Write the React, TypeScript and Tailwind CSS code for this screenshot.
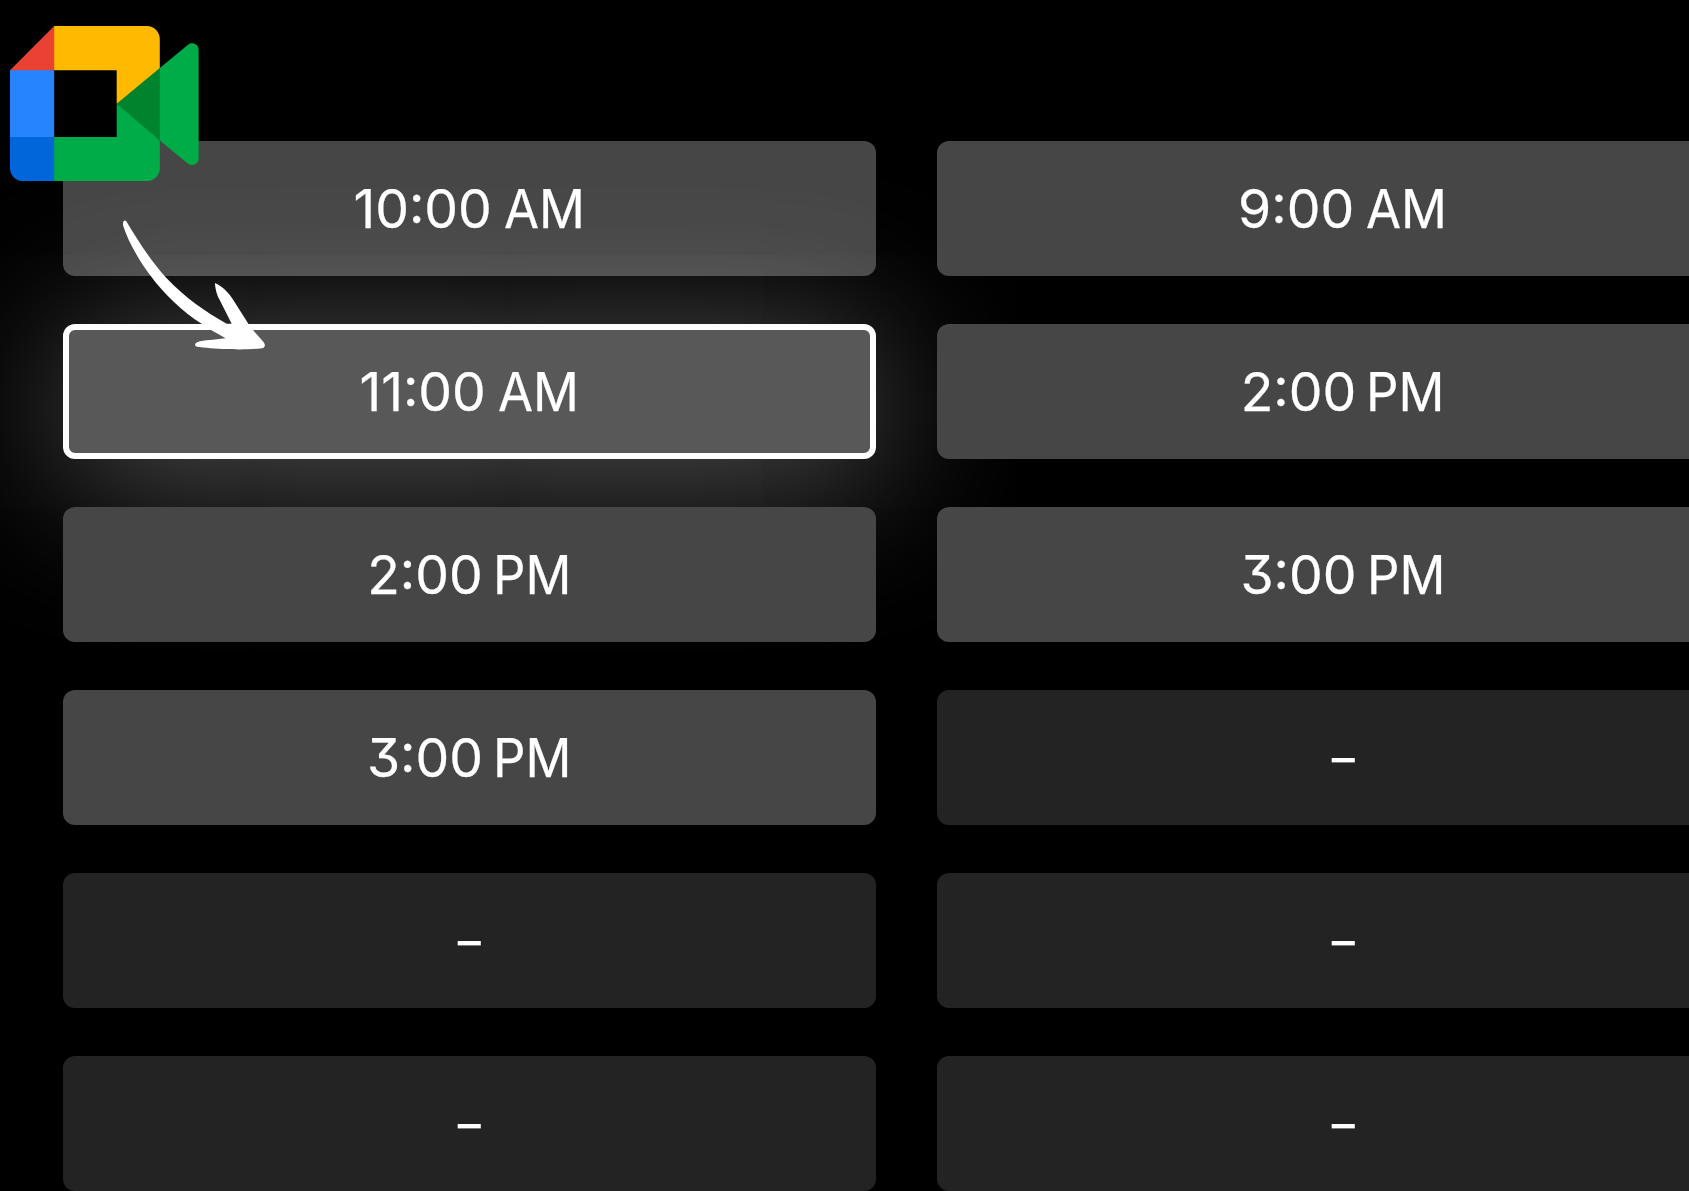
import React from "react";
import clsx from "clsx";

type Slot = {
    time: string | null;
    selected?: boolean;
};

const leftSlots: Slot[] = [
    { time: "10:00 AM" },
    { time: "11:00 AM", selected: true },
    { time: "2:00 PM" },
    { time: "3:00 PM" },
    { time: null },
    { time: null },
];

const rightSlots: Slot[] = [
    { time: "9:00 AM" },
    { time: "2:00 PM" },
    { time: "3:00 PM" },
    { time: null },
    { time: null },
    { time: null },
];

function MeetLogo() {
    return (
        <svg className="absolute left-[10px] top-[25.7px] w-[188.6px] h-[155.3px]" viewBox="0 0 87.5 72">
            <path fill="#00832d" d="M49.5 36l8.53 9.75 11.47 7.33 2-17.02-2-16.64-11.69 6.44z" />
            <path fill="#0066da" d="M0 51.5V66c0 3.315 2.685 6 6 6h14.5l3-10.96-3-9.54-9.95-3z" />
            <path fill="#e94235" d="M20.5 0L0 20.5l10.55 3 9.95-3 2.95-9.41z" />
            <path fill="#2684fc" d="M20.5 20.5H0v31h20.5z" />
            <path fill="#00ac47" d="M82.6 8.68L69.5 19.42v33.66l13.16 10.79c1.97 1.54 4.85.135 4.85-2.37V11c0-2.535-2.945-3.925-4.91-2.32zM49.5 36v15.5h-29V72h43c3.315 0 6-2.685 6-6V53.08z" />
            <path fill="#ffba00" d="M63.5 0h-43v20.5h29V36l20-16.57V6c0-3.315-2.685-6-6-6z" />
        </svg>
    );
}

function HandArrow() {
    return (
        <svg className="absolute left-[100px] top-[200px] w-[200px] h-[170px]" viewBox="0 0 600 510">
            <path
                fill="#fff"
                d="M69 68Q72 57 79 64C110 116 150 180 200 235C255 293 315 335 380 371L395 371L358 298C350 284 345 262 345 249C365 258 385 276 398 297L445 371L459 390L490 425Q499 437 491 443C475 449 400 449 380 447C350 446 310 443 291 440Q283 437 286 431Q289 426 300 424C325 420 350 418 377 415L333 390L305 371C250 338 190 280 150 225C115 178 83 122 69 76Z"
            />
        </svg>
    );
}

function SlotLabel({ time }: { time: string }) {
    const [clock, period] = time.split(" ");
    return (
        <span className="whitespace-pre [font-feature-settings:'cv09'] [-webkit-text-stroke:0.25px_white]">
            <span>{clock}</span>
            <span className={period === "PM" ? "tracking-[-5px]" : "tracking-[-3px]"}> </span>
            <span className="-mr-[3.5px] inline-block origin-left scale-x-[0.95]">{period}</span>
        </span>
    );
}

function SlotButton({ time, selected }: Slot) {
    return (
        <button
            className={clsx(
                "flex h-[135px] w-full shrink-0 items-center justify-center rounded-xl text-[53.5px] leading-none text-white",
                selected && "border-[6px] border-white bg-[#585858] shadow-[0_16px_160px_rgba(255,255,255,0.375)]",
                !selected && (time ? "bg-[#464646]" : "bg-[#232323]")
            )}
        >
            {time ? <SlotLabel time={time} /> : <span className="scale-x-[0.86]">–</span>}
        </button>
    );
}

function SlotColumn({ slots }: { slots: Slot[] }) {
    return (
        <div className="flex w-[813px] shrink-0 flex-col gap-12">
            {slots.map((slot, i) => (
                <SlotButton key={i} {...slot} />
            ))}
        </div>
    );
}

export default function App() {
    return (
        <div className="relative h-[1191px] w-[1689px] overflow-hidden bg-black font-['Inter',sans-serif]">
            <div className="flex gap-[60.5px] pl-[63px] pt-[141px]">
                <SlotColumn slots={leftSlots} />
                <SlotColumn slots={rightSlots} />
            </div>
            <MeetLogo />
            <HandArrow />
        </div>
    );
}
